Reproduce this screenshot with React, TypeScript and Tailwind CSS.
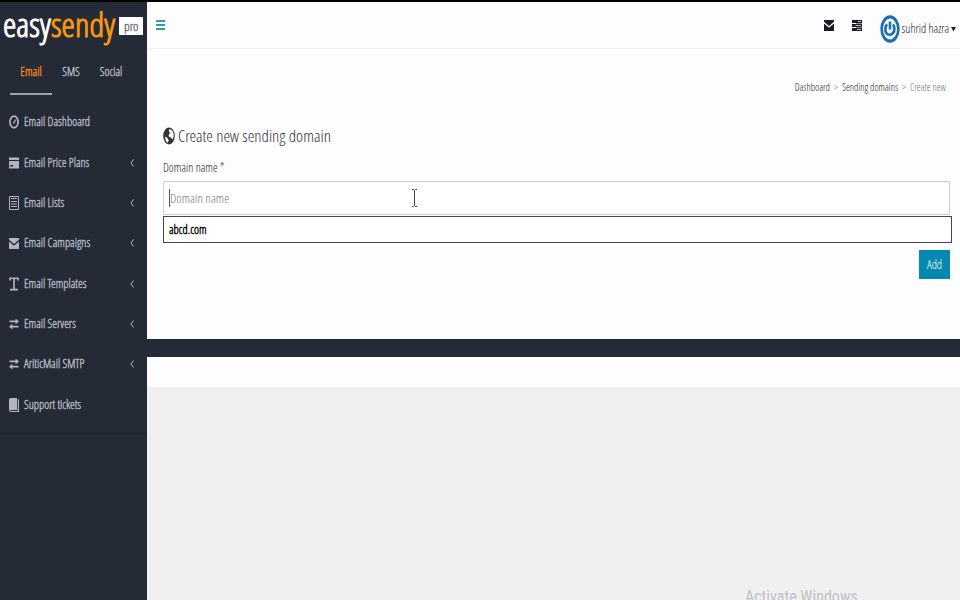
import type { ReactNode } from 'react';

type NavItem = { label: string; icon: ReactNode; children?: boolean };

function EnvelopeIcon() {
    return (
        <svg viewBox="0 0 10 11" className="w-[10px] h-[11px]" fill="currentColor">
            <path d="M0 0H10V1.8L5 6L0 1.8ZM0 3.6L5 7.8L10 3.6V11H0Z" />
        </svg>
    );
}

function TasksIcon() {
    return (
        <svg viewBox="0 0 10 11" className="w-[10px] h-[11px]" fill="currentColor">
            <path d="M0 0H10V3H0ZM0 4H10V7H0ZM0 8H10V11H0Z" />
            <path d="M6 1H9V2H6ZM3.5 5H9V6H3.5ZM5 9H9V10H5Z" fill="#b9b9c0" />
            <path d="M4 3H10V4H4ZM4 7H10V8H4Z" fill="#8d8d96" />
        </svg>
    );
}

function DialIcon() {
    return (
        <svg viewBox="0 0 10 14" className="w-[10px] h-[14px]" fill="none" stroke="currentColor">
            <ellipse cx="5" cy="7" rx="4.1" ry="5.8" strokeWidth="1.7" />
            <path d="M4.8 7.8L6.8 4.6" strokeWidth="1.1" />
            <circle cx="4.8" cy="7.8" r="0.6" strokeWidth="0.8" />
        </svg>
    );
}

function CardIcon() {
    return (
        <svg viewBox="0 0 10 12" className="w-[10px] h-[12px]" fill="currentColor">
            <path d="M0 0.5H10V3H0ZM0 4H10V11.5H0ZM1.2 8V9.6H4V8Z" fillRule="evenodd" />
        </svg>
    );
}

function ListIcon() {
    return (
        <svg viewBox="0 0 10 14" className="w-[10px] h-[14px]" fill="none" stroke="currentColor">
            <path d="M0.5 0.5H9.5V13.5H0.5Z" />
            <path d="M2 2.5H8M2 5.5H8M2 8H8M2 10.5H8" strokeWidth="1.2" />
        </svg>
    );
}

function TextIcon() {
    return (
        <svg viewBox="0 0 10 14" className="w-[10px] h-[14px]" fill="none" stroke="currentColor">
            <path d="M1 3.4V1.2H9V3.4M5 1.2V12.4M1 12.6H9" strokeWidth="1.6" />
        </svg>
    );
}

function SwapIcon() {
    return (
        <svg viewBox="0 0 10 12" className="w-[10px] h-[12px]" fill="currentColor">
            <path d="M0.5 2.6H6.6V0.4L10 3.4L6.6 6.2V4.2H0.5ZM9.5 7.8H3.4V5.8L0 8.8L3.4 11.6V9.4H9.5Z" />
        </svg>
    );
}

function BookIcon() {
    return (
        <svg viewBox="0 0 10 14" className="w-[10px] h-[14px]" fill="currentColor">
            <path d="M1.2 0H8V12H1.6L1 12.6L1.6 13H8.8V1.2H10V14H1.2L0 12.6V1.2Z" />
        </svg>
    );
}

function GlobeIcon() {
    return (
        <svg viewBox="0 0 12 18" className="w-[12px] h-[18px]">
            <ellipse cx="6" cy="9" rx="5.8" ry="8.4" fill="#33333d" />
            <path d="M6.4 2L9 3.2L10.6 6.6V10L9.4 12.6L8 10.4L6.2 10L5.6 8L7.2 5.8L5.8 4.6Z" fill="#fdfdfe" />
            <path d="M2 9.6L4.4 11L5.6 13.2L4.8 16L2.8 13.8Z" fill="#fdfdfe" />
        </svg>
    );
}

const navItems: NavItem[] = [
    { label: 'Email Dashboard', icon: <DialIcon /> },
    { label: 'Email Price Plans', icon: <CardIcon />, children: true },
    { label: 'Email Lists', icon: <ListIcon />, children: true },
    { label: 'Email Campaigns', icon: <EnvelopeIcon />, children: true },
    { label: 'Email Templates', icon: <TextIcon />, children: true },
    { label: 'Email Servers', icon: <SwapIcon />, children: true },
    { label: 'AriticMail SMTP', icon: <SwapIcon />, children: true },
    { label: 'Support tickets', icon: <BookIcon /> },
];

function Sidebar() {
    return (
        <aside className="w-[147px] shrink-0 bg-[#242a36] text-[#b0b5c0] font-bold">
            <a href="#" className="flex items-center h-[48px] pl-[3px] gap-1">
                <span className="pb-1 text-[34px] leading-none text-white">
                    easy<span className="text-[#f7960f]">sendy</span>
                </span>
                <span className="bg-white text-[#77777f] text-[13px] leading-[18px] px-[5px]">pro</span>
            </a>

            <div className="flex pl-[10px] pt-[9px] text-[12px]">
                <a href="#" className="w-[42px] h-[36px] pt-1 text-center text-[#f7870f] border-b-2 border-[#9aa3b0]">Email</a>
                <a href="#" className="w-[38px] pt-1 text-center">SMS</a>
                <a href="#" className="w-[42px] pt-1 text-center">Social</a>
            </div>

            <nav className="mt-[7px] border-b border-[#1f2530] pb-[8px]">
                <ul className="grid auto-rows-fr h-[323px]">
                    {navItems.map((item) => (
                        <li key={item.label}>
                            <a href="#" className="flex items-center h-full pl-[9px] pr-[13px] text-[12px]">
                                <span className="w-[15px]">{item.icon}</span>
                                <span className="grow">{item.label}</span>
                                {item.children && (
                                    <svg viewBox="0 0 4 8" className="w-1 h-2" fill="none" stroke="currentColor">
                                        <path d="M3.5 0.5L1 4L3.5 7.5" />
                                    </svg>
                                )}
                            </a>
                        </li>
                    ))}
                </ul>
            </nav>
        </aside>
    );
}

function Header() {
    return (
        <header className="flex items-center h-[47px] pl-[9px] pr-1 border-b border-[#f1f1f3] text-[#1c1c26]">
            <button type="button" aria-label="Toggle menu" className="text-[#2c9faf]">
                <svg viewBox="0 0 9 10" className="w-[9px] h-[10px]" fill="currentColor">
                    <path d="M0 0H9V2H0ZM0 4H9V6H0ZM0 8H9V10H0Z" />
                </svg>
            </button>
            <div className="flex items-center ml-auto gap-[18px]">
                <button type="button" aria-label="Messages"><EnvelopeIcon /></button>
                <button type="button" aria-label="Tasks"><TasksIcon /></button>
                <button type="button" className="flex items-center gap-[2px] mt-2 text-[12px]">
                    <svg viewBox="0 0 20 28" className="w-[20px] h-[28px]" fill="none">
                        <ellipse cx="10" cy="14" rx="9.7" ry="13.8" fill="#1d6db5" />
                        <ellipse cx="10" cy="14" rx="7" ry="10.4" fill="#fff" />
                        <path d="M7.2 9.4C4.6 11.4 4.8 17.6 7.4 19.2C10.4 20.8 14.4 18.6 14.4 14C14.4 11.6 13.8 10.2 12.8 9.4" stroke="#1d6db5" strokeWidth="2.6" />
                        <path d="M10 6.5V14.5" stroke="#1d6db5" strokeWidth="2.6" />
                    </svg>
                    suhrid hazra
                    <svg viewBox="0 0 5 5" className="w-[5px] h-[5px]" fill="currentColor">
                        <path d="M0 0H5L2.5 4.5Z" />
                    </svg>
                </button>
            </div>
        </header>
    );
}

export default function App() {
    return (
        <div className="relative min-h-screen flex overflow-hidden border-t-2 border-black bg-[#f0f0f2] text-[#1c1c26] font-['Open_Sans_Condensed_Light','Roboto_Condensed','Open_Sans',sans-serif]">
            <Sidebar />
            <div className="grow">
                <div className="bg-[#fdfdfe] pb-[60px]">
                    <Header />

                    <nav aria-label="Breadcrumb" className="flex justify-end gap-1 pt-[30px] pr-[14px] text-[10px] leading-4">
                        <a href="#">Dashboard</a>
                        <span className="text-gray-500">&gt;</span>
                        <a href="#">Sending domains</a>
                        <span className="text-gray-500">&gt;</span>
                        <span className="text-gray-500">Create new</span>
                    </nav>

                    <main className="pl-4 pr-[10px] pt-[29px]">
                        <h1 className="flex items-center gap-[3px] h-6 text-[17px] text-[#33333d]">
                            <GlobeIcon />
                            Create new sending domain
                        </h1>
                        <form>
                            <label htmlFor="domain" className="block mt-[12px] text-[12px] leading-4">
                                Domain name <span className="text-red-700">*</span>
                            </label>
                            <div className="relative mt-[5px]">
                                <input
                                    id="domain"
                                    type="text"
                                    placeholder="Domain name"
                                    className="block w-full h-[34px] px-[6px] border border-[#cfcfd3] bg-white text-[13px] outline-none placeholder:text-[#77777d]"
                                />
                                {/* Text caret and mouse pointer */}
                                <span className="absolute left-[6px] top-2 w-px h-[18px] bg-[#55555b]" />
                                <svg viewBox="0 0 7 18" className="absolute left-[248px] top-2 w-[7px] h-[18px]" fill="none" stroke="#44444a">
                                    <path d="M1 0.5H2.5L3.5 1.5L4.5 0.5H6M3.5 1.5V16.5M1 17.5H2.5L3.5 16.5L4.5 17.5H6" />
                                </svg>
                            </div>
                            <ul className="-mr-[2px] mt-[1px] border border-[#45454b] bg-white">
                                <li className="px-[5px] leading-[25px] text-[12px] font-bold text-black">abcd.com</li>
                            </ul>
                            <div className="flex justify-end mt-[7px]">
                                <button type="submit" className="w-[31px] h-[29px] bg-[#0788b0] text-white text-[12px]">Add</button>
                            </div>
                        </form>
                    </main>
                </div>
                <div className="h-[18px] bg-[#242a36]" />
                <div className="h-[30px] bg-[#fefdff]" />
            </div>

            <p className="absolute left-[745px] top-[583px] text-[16px] leading-6 text-[#c0c0c4] font-['Roboto_Condensed','Roboto']">Activate Windows</p>
        </div>
    );
}
